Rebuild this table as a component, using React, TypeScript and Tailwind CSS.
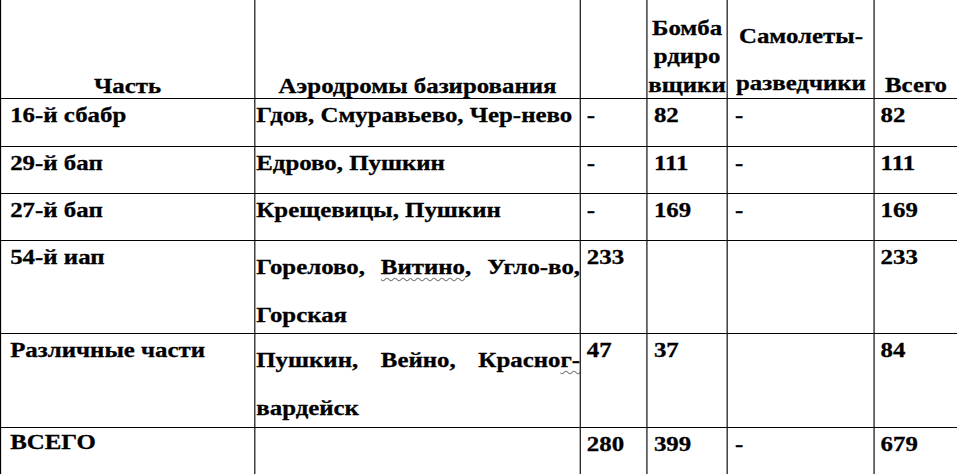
import React from 'react';

// the scan is stretched horizontally, so the grid is laid out narrow and widened as a whole
const cell = 'border-l border-t border-black';
const head = `${cell} flex flex-col justify-end text-center leading-[24px]`;
const body = 'pt-[3px] leading-[26px]';

type Row = {
  part: string;
  base: string;
  fighters: string;
  bombers: string;
  scouts: string;
  total: string;
};

const rows: Row[] = [
  { part: '16-й сбабр', base: 'Гдов, Смуравьево, Чер-нево', fighters: '-', bombers: '82', scouts: '-', total: '82' },
  { part: '29-й бап', base: 'Едрово, Пушкин', fighters: '-', bombers: '111', scouts: '-', total: '111' },
  { part: '27-й бап', base: 'Крещевицы, Пушкин', fighters: '-', bombers: '169', scouts: '-', total: '169' },
];

function Squiggle({ children }: { children: React.ReactNode }) {
  return (
    <span className="underline decoration-wavy decoration-[#777] decoration-1 underline-offset-[3px]">
      {children}
    </span>
  );
}

function NumCell({ value, pad }: { value: string; pad: string }) {
  return <div className={`${cell} ${pad} ${body}`}>{value}</div>;
}

export default function App() {
  return (
    <div className="w-[957px] h-[474px] overflow-hidden bg-white">
      <div
        className="w-[847px] origin-top-left scale-x-[1.13] -mt-px grid grid-cols-[224.8px_288.5px_58.4px_71.7px_129.9px_1fr] grid-rows-[99px_48px_47px_47px_93px_94px_47px] text-black font-bold text-[22px] [-webkit-text-stroke:0.3px_#000]"
        style={{ fontFamily: '"Liberation Serif", "Times New Roman", serif' }}
      >
        {/* header */}
        <div className={head}>Часть</div>
        <div className={head}>Аэродромы базирования</div>
        <div className={cell} />
        <div className={`${cell} flex flex-col justify-end text-center leading-[28.5px] mb-[-1px]`}>
          <div>Бомба</div>
          <div>рдиро</div>
          <div>вщики</div>
        </div>
        <div className={`${head} pb-[3px]`}>
          <div className="mb-[23px]">Самолеты-</div>
          <div>разведчики</div>
        </div>
        <div className={`${head} pb-[1px]`}>Всего</div>

        {rows.map((r) => (
          <React.Fragment key={r.part}>
            <div className={`${cell} pl-[8px] ${body}`}>{r.part}</div>
            <div className={`${cell} pl-[1px] ${body} whitespace-nowrap`}>{r.base}</div>
            <NumCell value={r.fighters} pad="pl-[5px]" />
            <NumCell value={r.bombers} pad="pl-[6px]" />
            <NumCell value={r.scouts} pad="pl-[6px]" />
            <NumCell value={r.total} pad="pl-[5px]" />
          </React.Fragment>
        ))}

        {/* 54-й иап */}
        <div className={`${cell} pl-[8px] ${body}`}>54-й иап</div>
        <div className={`${cell} pl-[1px] pt-[2px] leading-[48px]`}>
          <div className="text-justify [text-align-last:justify]">
            Горелово, <Squiggle>Витино</Squiggle>, Угло-во,
          </div>
          <div>Горская</div>
        </div>
        <NumCell value="233" pad="pl-[5px]" />
        <div className={cell} />
        <div className={cell} />
        <NumCell value="233" pad="pl-[5px]" />

        {/* Различные части */}
        <div className={`${cell} pl-[8px] ${body}`}>Различные части</div>
        <div className={`${cell} pl-[1px] pt-[2px] leading-[48px]`}>
          <div className="text-justify [text-align-last:justify]">
            Пушкин, Вейно, Красно<Squiggle>г-</Squiggle>
          </div>
          <div>вардейск</div>
        </div>
        <NumCell value="47" pad="pl-[5px]" />
        <NumCell value="37" pad="pl-[6px]" />
        <div className={cell} />
        <NumCell value="84" pad="pl-[5px]" />

        {/* ВСЕГО */}
        <div className={`${cell} pl-[8px] pt-[1px] leading-[26px]`}>ВСЕГО</div>
        <div className={cell} />
        <NumCell value="280" pad="pl-[5px]" />
        <NumCell value="399" pad="pl-[6px]" />
        <NumCell value="-" pad="pl-[6px]" />
        <NumCell value="679" pad="pl-[5px]" />
      </div>
    </div>
  );
}
